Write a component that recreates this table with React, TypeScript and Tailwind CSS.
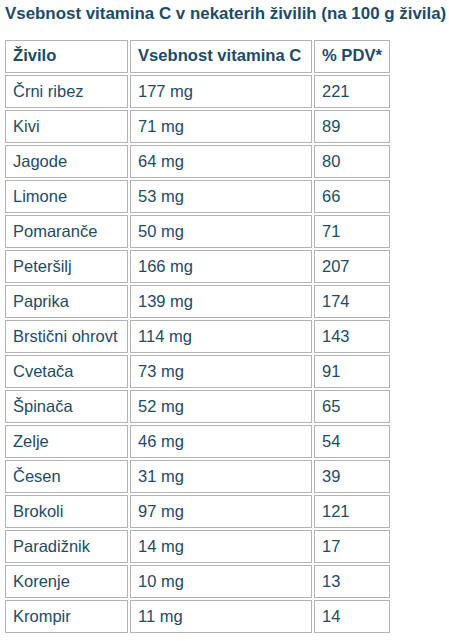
const rows: [string, string, string][] = [
  ["Črni ribez", "177 mg", "221"],
  ["Kivi", "71 mg", "89"],
  ["Jagode", "64 mg", "80"],
  ["Limone", "53 mg", "66"],
  ["Pomaranče", "50 mg", "71"],
  ["Peteršilj", "166 mg", "207"],
  ["Paprika", "139 mg", "174"],
  ["Brstični ohrovt", "114 mg", "143"],
  ["Cvetača", "73 mg", "91"],
  ["Špinača", "52 mg", "65"],
  ["Zelje", "46 mg", "54"],
  ["Česen", "31 mg", "39"],
  ["Brokoli", "97 mg", "121"],
  ["Paradižnik", "14 mg", "17"],
  ["Korenje", "10 mg", "13"],
  ["Krompir", "11 mg", "14"],
];

function Cell({ children, head }: { children: React.ReactNode; head?: boolean }) {
  return (
    <div
      className={`flex h-[33px] items-center whitespace-nowrap border border-[#b3b3b3] px-[7px] ${
        head ? "text-[16.6px] font-bold" : "text-[16.5px]"
      }`}
    >
      {children}
    </div>
  );
}

export default function App() {
  return (
    <div className="min-h-screen bg-white px-[5px] pt-[4px] text-[#1d4b66] [font-family:'Liberation_Sans',Arial,sans-serif]">
      <h1 className="whitespace-nowrap text-[16.9px] font-bold leading-[20px]">
        Vsebnost vitamina C v nekaterih živilih (na 100 g živila)
      </h1>
      <div className="mt-[16px] grid w-fit grid-cols-[123px_182px_76px] gap-[2px]">
        <Cell head>Živilo</Cell>
        <Cell head>Vsebnost vitamina C</Cell>
        <Cell head>% PDV*</Cell>
        {rows.map(([food, amount, pdv]) => (
          <>
            <Cell key={food + "a"}>{food}</Cell>
            <Cell key={food + "b"}>{amount}</Cell>
            <Cell key={food + "c"}>{pdv}</Cell>
          </>
        ))}
      </div>
    </div>
  );
}
